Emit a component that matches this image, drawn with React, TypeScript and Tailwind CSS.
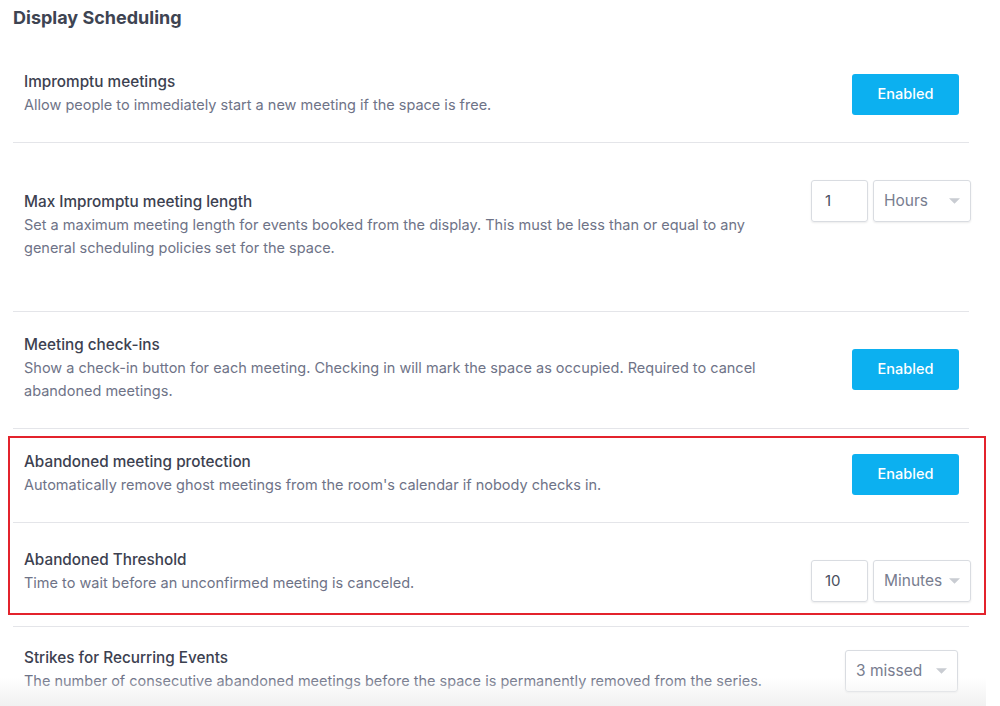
import type { ReactNode } from "react";

function EnabledButton() {
  return (
    <button className="w-[107px] h-[41px] rounded-[3px] bg-[#0cb0f0] text-white text-[14.5px] font-medium leading-none">
      Enabled
    </button>
  );
}

function Caret() {
  return (
    <svg viewBox="0 0 12 6" className="absolute right-[10px] top-[17px] w-[11px] h-[6px] fill-[#c9ccd2]">
      <path d="M0 0h12L6 6z" />
    </svg>
  );
}

function NumberBox({ value }: { value: string }) {
  return (
    <div className="w-[57px] h-[42px] border border-[#d9dce1] rounded-[3px] shadow-[0_1px_2px_rgba(0,0,0,0.08)] pl-[13px] flex items-center text-[15px] text-[#4a4f5e]">
      {value}
    </div>
  );
}

function SelectBox({ value, width }: { value: string; width: string }) {
  return (
    <div className={`relative h-[42px] border border-[#d9dce1] rounded-[3px] shadow-[0_1px_2px_rgba(0,0,0,0.08)] pl-[10px] pr-[28px] flex items-center overflow-hidden whitespace-nowrap text-[15.5px] text-[#787d8f] ${width}`}>
      <span className="overflow-hidden">{value}</span>
      <Caret />
    </div>
  );
}

function Row({
  title,
  desc,
  control,
  className,
  textClass = "",
  controlClass = "",
  last = false,
}: {
  title: string;
  desc: string;
  control: ReactNode;
  className: string;
  textClass?: string;
  controlClass?: string;
  last?: boolean;
}) {
  return (
    <div className={`flex items-start justify-between ${last ? "" : "border-b border-[#e4e5e9]"} ${className}`}>
      <div className={`pl-[11px] max-w-[770px] ${textClass}`}>
        <div className="text-[15.3px] leading-[23px] font-medium text-[#3c4150]">{title}</div>
        <div className="text-[14.5px] leading-[23px] text-[#6e7387]">{desc}</div>
      </div>
      <div className={`flex gap-[5px] shrink-0 ${controlClass}`}>{control}</div>
    </div>
  );
}

export default function App() {
  return (
    <div className="relative w-[1000px] h-[706px] overflow-hidden bg-white font-['Inter',sans-serif]">
      <h2 className="ml-[13px] mt-[6px] text-[18px] leading-[24px] font-bold text-[#3e4452]">Display Scheduling</h2>

      <div className="ml-[13px] w-[956px]">
        <Row
          title="Impromptu meetings"
          desc="Allow people to immediately start a new meeting if the space is free."
          control={<EnabledButton />}
          className="pt-[40px] pb-[26px]"
          controlClass="mt-[4px] mr-[10px]"
        />
        <Row
          title="Max Impromptu meeting length"
          desc="Set a maximum meeting length for events booked from the display. This must be less than or equal to any general scheduling policies set for the space."
          control={
            <>
              <NumberBox value="1" />
              <SelectBox value="Hours" width="w-[98px]" />
            </>
          }
          className="pt-[37px] pb-[52px]"
          textClass="mt-[10px]"
          controlClass="-mr-[2px]"
        />
        <Row
          title="Meeting check-ins"
          desc="Show a check-in button for each meeting. Checking in will mark the space as occupied. Required to cancel abandoned meetings."
          control={<EnabledButton />}
          className="pt-[21px] pb-[26px]"
          controlClass="mt-[16px] mr-[10px]"
        />

        <div className="relative">
          <Row
            title="Abandoned meeting protection"
            desc="Automatically remove ghost meetings from the room's calendar if nobody checks in."
            control={<EnabledButton />}
            className="pt-[21px] pb-[26px]"
            controlClass="mt-[4px] mr-[10px]"
          />
          <Row
            title="Abandoned Threshold"
            desc="Time to wait before an unconfirmed meeting is canceled."
            control={
              <>
                <NumberBox value="10" />
                <SelectBox value="Minutes" width="w-[98px]" />
              </>
            }
            className="pt-[25px] pb-[24px]"
            controlClass="mt-[12px] -mr-[2px]"
          />
          <div className="absolute top-[7px] bottom-[12px] -left-[5px] -right-[17px] border-2 border-[#e3232c] pointer-events-none" />
        </div>

        <Row
          title="Strikes for Recurring Events"
          desc="The number of consecutive abandoned meetings before the space is permanently removed from the series."
          control={<SelectBox value="3 missed" width="w-[113px]" />}
          className="pt-[19px] pb-[20px]"
          controlClass="mt-[4px] mr-[11px]"
          last
        />
      </div>

      <div className="absolute left-0 bottom-0 w-[986px] h-[28px] bg-linear-to-b from-white/0 to-[#f1f1f1] pointer-events-none" />
    </div>
  );
}
